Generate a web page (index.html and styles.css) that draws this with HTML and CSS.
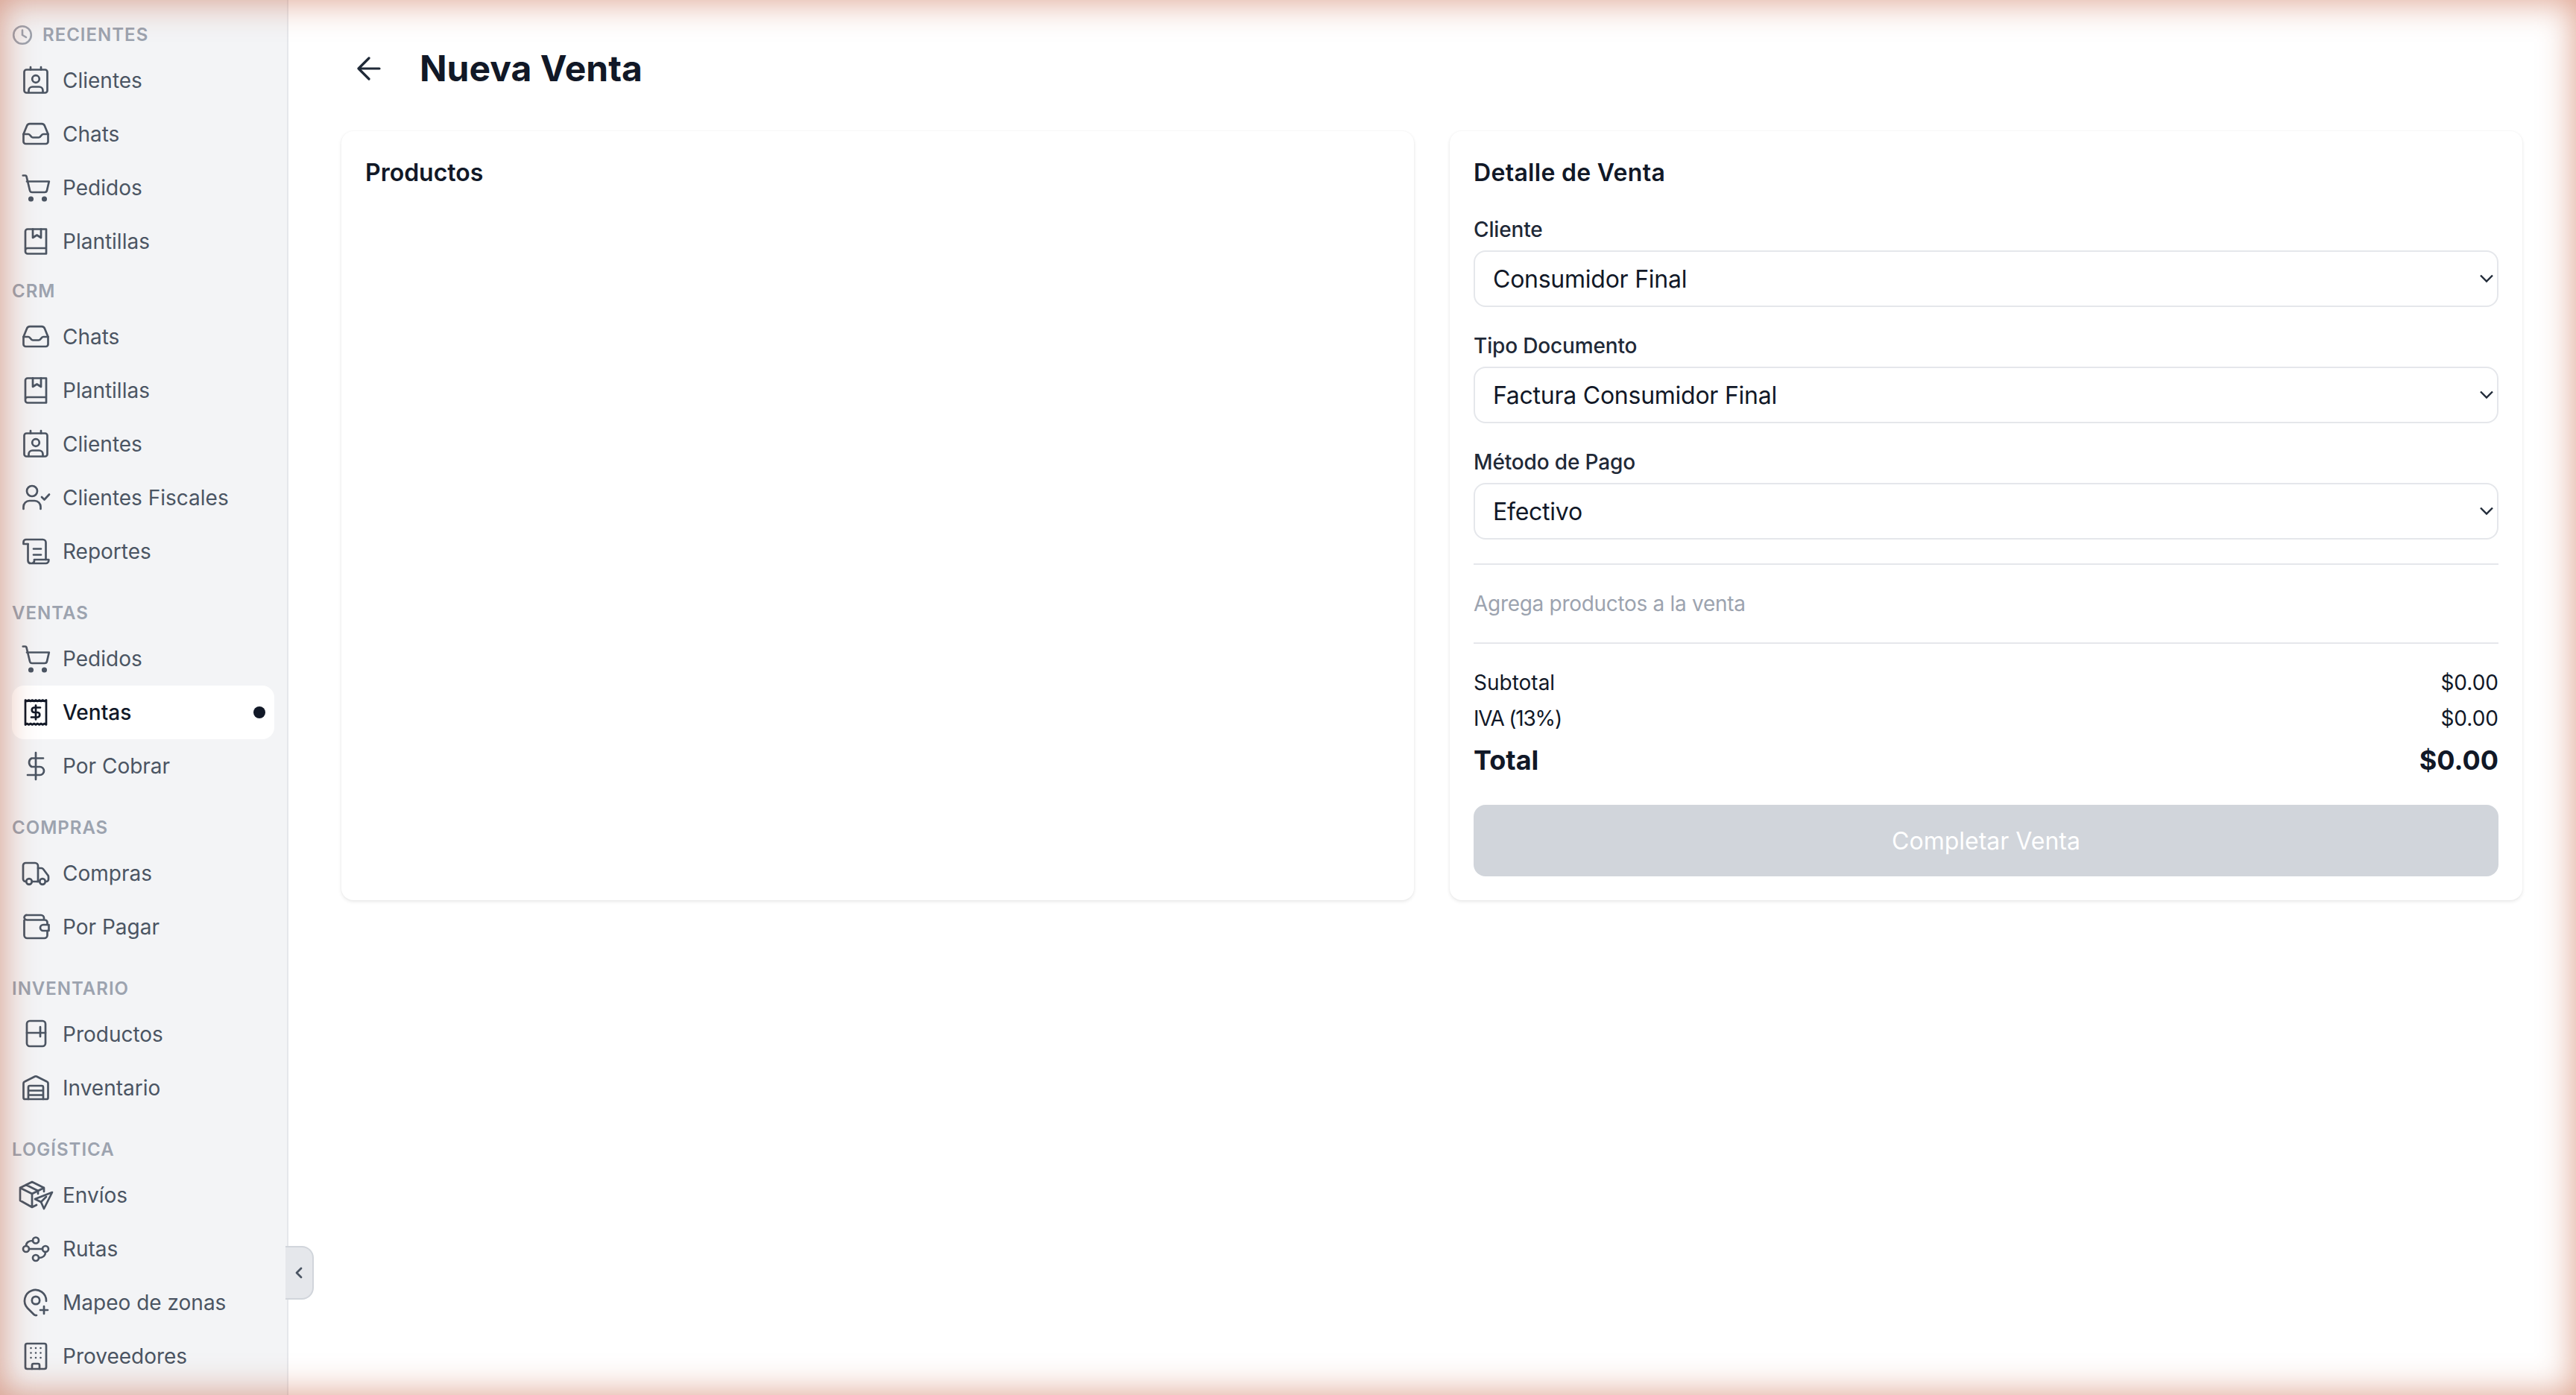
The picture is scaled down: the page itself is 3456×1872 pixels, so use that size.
FILE: index.html
```html
<!DOCTYPE html>
<html lang="es">
<head>
<meta charset="utf-8">
<title>Nueva Venta</title>
<link rel="stylesheet" href="styles.css">
</head>
<body>
<svg class="defs" aria-hidden="true">
  <symbol id="i-contact" viewBox="0 0 40 40"><rect x="4.5" y="5.5" width="31" height="31" rx="3"/><path d="M13 2v3.5M27 2v3.5"/><circle cx="20" cy="18" r="4.8"/><path d="M10.5 36v-2.5a5 5 0 0 1 5-5h9a5 5 0 0 1 5 5V36"/></symbol>
  <symbol id="i-inbox" viewBox="0 0 40 40"><path d="M3.5 20 8 9a4.500 4.500 0 0 1 4-2.800h16A4.500 4.500 0 0 1 32 9l4.500 11v10a3 3 0 0 1-3 3h-27a3 3 0 0 1-3-3z"/><path d="M3.500 20H10c3 0 3 4.500 6 4.500h8c3 0 3-4.500 6-4.500h6.500"/></symbol>
  <symbol id="i-cart" viewBox="0 0 40 40"><path d="M2.800 3.500H6c.8 0 1.300.5 1.500 1.200L12 23.500c.4 1.500 1.300 2.500 3 2.500h17c1.700 0 2.700-1 3-2.500l2.800-12H8"/><circle class="fill" cx="13.500" cy="35" r="2.200"/><circle class="fill" cx="31.500" cy="35" r="2.200"/></symbol>
  <symbol id="i-book" viewBox="0 0 40 40"><path d="M6 32V6.500a3 3 0 0 1 3-3h25v33H9a3 3 0 0 1-3-3v-1.500a3 3 0 0 1 3-3h25"/><path d="M16 3.500V15l5.500-3.500L27 15V3.500"/></symbol>
  <symbol id="i-usercheck" viewBox="0 0 40 40"><circle cx="15" cy="11" r="7"/><path d="M3.500 35v-3a8 8 0 0 1 8-8h7a8 8 0 0 1 8 8v3"/><path d="m28 19 3.500 3.500L38 15.500"/></symbol>
  <symbol id="i-scroll" viewBox="0 0 40 40"><path d="M9.500 10V32.500a4 4 0 0 0 4 3.500h20a3.800 3.800 0 0 0 3.800-3.800V31H18v1.500a3.700 3.700 0 0 1-3.500 3.500"/><path d="M33.500 31V8a4 4 0 0 0-4-4H7a3.500 3.500 0 0 0-3.500 3.500V10h6"/><path d="M17 16.500h10M17 24.500h10"/></symbol>
  <symbol id="i-receipt" viewBox="0 0 40 40"><path d="M6 3.500 8.300 5l2.300-1.500L13 5l2.300-1.500L17.700 5 20 3.500 22.300 5l2.400-1.500L27 5l2.300-1.500L31.700 5 34 3.500v33L31.700 35l-2.400 1.500L27 35l-2.300 1.500-2.400-1.500-2.300 1.500-2.300-1.500-2.400 1.500L13 35l-2.400 1.500L8.300 35 6 36.500z"/><path d="M26 13.500H17.500a3.300 3.300 0 0 0 0 6.500h5a3.300 3.300 0 0 1 0 6.500H14M20 10.500v19"/></symbol>
  <symbol id="i-dollar" viewBox="0 0 40 40"><path d="M20 2v36M30 9.500H14.500a6.500 6.500 0 0 0 0 11.500h11a5.500 5.500 0 0 1 0 11H9"/></symbol>
  <symbol id="i-truck" viewBox="0 0 40 40"><path d="M7 31H6.500a3.500 3.500 0 0 1-3.500-3.500v-18A3.500 3.500 0 0 1 6.500 6H19a4 4 0 0 1 4 4v21h-8"/><path d="M23 13h4.500a3 3 0 0 1 2.500 1.200l6.200 8.300a3 3 0 0 1 .8 2V28a3 3 0 0 1-3 3h-.5M22 31h3"/><circle cx="11" cy="31" r="3.800"/><circle cx="29" cy="31" r="3.800"/></symbol>
  <symbol id="i-wallet" viewBox="0 0 40 40"><path d="M4.500 11v20a4 4 0 0 0 4 4h23a4 4 0 0 0 4-4v-6M35.500 17v-3a3.500 3.500 0 0 0-3.500-3.500H8.500a4 4 0 0 1-4-3A3.500 3.500 0 0 1 8.500 4H27a4 4 0 0 1 4 4v2.500"/><path d="M37.500 17H30a4 4 0 0 0 0 8h7.500z"/></symbol>
  <symbol id="i-fridge" viewBox="0 0 40 40"><rect x="8" y="2" width="25" height="34" rx="4"/><path d="M8 18h25M26 10v13"/></symbol>
  <symbol id="i-garage" viewBox="0 0 40 40"><path d="M3.500 33V14a3 3 0 0 1 2-2.800L19 4.500a2.500 2.500 0 0 1 2 0l13.500 6.700a3 3 0 0 1 2 2.800v19a2 2 0 0 1-2 2h-29a2 2 0 0 1-2-2z"/><path d="M10 35V19a2 2 0 0 1 2-2h16a2 2 0 0 1 2 2v16M10 23.500h20M10 29.500h20"/></symbol>
  <symbol id="i-send" viewBox="0 0 40 40"><path d="M-1 10 15 2l16 8v5M-1 10v17l16 9 6-3M-1 10l16 8 16-8M15 18v18M7 6l16 8v4"/><path d="M42 16 19 25l8 4 4 9z"/><path d="m27 29 7-7"/></symbol>
  <symbol id="i-route" viewBox="0 0 40 40"><circle cx="20" cy="8.500" r="4"/><circle cx="7" cy="20" r="4"/><circle cx="33" cy="20" r="4"/><circle cx="20" cy="32" r="4"/><path d="M11 20h18M16 9c-5 0-9 2-9 7M24.500 32c5 0 8.500-3 8.500-8"/></symbol>
  <symbol id="i-pin" viewBox="0 0 40 40"><circle cx="20" cy="17" r="5.200"/><path d="M34 18a14.500 14.500 0 1 0-25 9.500L17.500 36c.8.800 2 1.300 3.500 1"/><path d="M31 25v10M26 30h10"/></symbol>
  <symbol id="i-building" viewBox="0 0 40 40"><rect x="6" y="3" width="28" height="34" rx="2.500"/><path d="M15 37v-5a2 2 0 0 1 2-2h6a2 2 0 0 1 2 2v5"/><path class="dots" d="M13.500 9h.01M20 9h.01M26.500 9h.01M13.500 15.500h.01M20 15.500h.01M26.500 15.500h.01M13.500 22h.01M20 22h.01M26.500 22h.01"/></symbol>
</svg>

<div class="app">
  <aside class="sidebar">
    <section class="group">
      <h2 class="group-title"><svg class="clock" viewBox="0 0 28 28"><circle cx="14" cy="14" r="11.800"/><path d="M14 7.500V14l5 3"/></svg>RECIENTES</h2>
      <a class="item"><svg class="icon"><use href="#i-contact"/></svg>Clientes</a>
      <a class="item"><svg class="icon"><use href="#i-inbox"/></svg>Chats</a>
      <a class="item"><svg class="icon"><use href="#i-cart"/></svg>Pedidos</a>
      <a class="item"><svg class="icon"><use href="#i-book"/></svg>Plantillas</a>
    </section>
    <section class="group">
      <h2 class="group-title">CRM</h2>
      <a class="item"><svg class="icon"><use href="#i-inbox"/></svg>Chats</a>
      <a class="item"><svg class="icon"><use href="#i-book"/></svg>Plantillas</a>
      <a class="item"><svg class="icon"><use href="#i-contact"/></svg>Clientes</a>
      <a class="item"><svg class="icon"><use href="#i-usercheck"/></svg>Clientes Fiscales</a>
      <a class="item"><svg class="icon"><use href="#i-scroll"/></svg>Reportes</a>
    </section>
    <section class="group spaced">
      <h2 class="group-title">VENTAS</h2>
      <a class="item"><svg class="icon"><use href="#i-cart"/></svg>Pedidos</a>
      <a class="item active"><svg class="icon"><use href="#i-receipt"/></svg>Ventas<span class="dot"></span></a>
      <a class="item"><svg class="icon"><use href="#i-dollar"/></svg>Por Cobrar</a>
    </section>
    <section class="group spaced">
      <h2 class="group-title">COMPRAS</h2>
      <a class="item"><svg class="icon"><use href="#i-truck"/></svg>Compras</a>
      <a class="item"><svg class="icon"><use href="#i-wallet"/></svg>Por Pagar</a>
    </section>
    <section class="group spaced">
      <h2 class="group-title">INVENTARIO</h2>
      <a class="item"><svg class="icon"><use href="#i-fridge"/></svg>Productos</a>
      <a class="item"><svg class="icon"><use href="#i-garage"/></svg>Inventario</a>
    </section>
    <section class="group spaced">
      <h2 class="group-title">LOGÍSTICA</h2>
      <a class="item"><svg class="icon"><use href="#i-send"/></svg>Envíos</a>
      <a class="item"><svg class="icon"><use href="#i-route"/></svg>Rutas</a>
      <a class="item"><svg class="icon"><use href="#i-pin"/></svg>Mapeo de zonas</a>
      <a class="item"><svg class="icon"><use href="#i-building"/></svg>Proveedores</a>
    </section>
    <button class="collapse" type="button" aria-label="Contraer"><svg viewBox="0 0 16 20"><path d="M11 4 5 10l6 6"/></svg></button>
  </aside>

  <main class="main">
    <header class="page-head">
      <button class="back" type="button" aria-label="Volver"><svg viewBox="0 0 48 48"><path d="M38 24H10M24 10 10 24l14 14"/></svg></button>
      <h1 class="page-title">Nueva Venta</h1>
    </header>
    <div class="columns">
      <section class="card">
        <h2 class="card-title">Productos</h2>
      </section>
      <section class="card">
        <h2 class="card-title detail-title">Detalle de Venta</h2>
        <div class="fields">
          <div class="field">
            <label class="label" for="cliente">Cliente</label>
            <div class="select-wrap">
              <select class="select" id="cliente"><option>Consumidor Final</option></select>
              <svg class="chevron" viewBox="0 0 18 12"><path d="m1 1.500 8 8 8-8"/></svg>
            </div>
          </div>
          <div class="field">
            <label class="label" for="tipo">Tipo Documento</label>
            <div class="select-wrap">
              <select class="select" id="tipo"><option>Factura Consumidor Final</option></select>
              <svg class="chevron" viewBox="0 0 18 12"><path d="m1 1.500 8 8 8-8"/></svg>
            </div>
          </div>
          <div class="field">
            <label class="label" for="pago">Método de Pago</label>
            <div class="select-wrap">
              <select class="select" id="pago"><option>Efectivo</option></select>
              <svg class="chevron" viewBox="0 0 18 12"><path d="m1 1.500 8 8 8-8"/></svg>
            </div>
          </div>
        </div>
        <p class="empty">Agrega productos a la venta</p>
        <div class="totals">
          <div class="row"><span>Subtotal</span><span>$0.00</span></div>
          <div class="row"><span class="narrow">IVA (13%)</span><span>$0.00</span></div>
          <div class="row total"><span>Total</span><span>$0.00</span></div>
        </div>
        <button class="submit" type="button" disabled>Completar Venta</button>
      </section>
    </div>
  </main>
</div>
<div class="glow"></div>
</body>
</html>
```

FILE: styles.css
```css
* { box-sizing: border-box; }

html, body {
  margin: 0;
  height: 100%;
  overflow: hidden;
  background: #fff;
}

body {
  font-family: Inter, "Liberation Sans", sans-serif;
  color: #111827;
}

.defs { display: none; }

.app {
  display: flex;
  height: 1872px;
}

.sidebar {
  position: relative;
  flex: 0 0 387px;
  padding: 16px 17px 0 16px;
  background: #f3f4f6;
  border-right: 2px solid #e5e7eb;
}

.group.spaced { margin-top: 16px; }

.group-title {
  display: flex;
  align-items: center;
  gap: 13px;
  height: 56px;
  margin: 0;
  padding: 15px 0 9px 0;
  font-size: 24px;
  line-height: 32px;
  font-weight: 600;
  letter-spacing: 1px;
  color: #9ca3af;
}

.clock {
  width: 28px;
  height: 28px;
  fill: none;
  stroke: #9ca3af;
  stroke-width: 2.600;
  stroke-linecap: round;
  stroke-linejoin: round;
}

.item {
  display: flex;
  align-items: center;
  gap: 16px;
  height: 72px;
  padding: 0 12px;
  border-radius: 16px;
  font-size: 28px;
  font-weight: 400;
  color: #4b5563;
}

.item.active {
  background: #fff;
  color: #111827;
  font-weight: 500;
}

.icon {
  flex: 0 0 40px;
  width: 40px;
  height: 40px;
  overflow: visible;
  fill: none;
  stroke: currentColor;
  stroke-width: 2.700;
  stroke-linecap: round;
  stroke-linejoin: round;
}

symbol { overflow: visible; }
symbol .fill { fill: currentColor; }
symbol .dots { stroke-width: 2.600; }

.dot {
  width: 16px;
  height: 16px;
  margin-left: auto;
  border-radius: 50%;
  background: #111827;
}

.collapse {
  position: absolute;
  top: 1672px;
  left: 383px;
  display: flex;
  align-items: center;
  justify-content: center;
  width: 38px;
  height: 72px;
  padding: 0;
  background: #e5e7eb;
  border: 2px solid #d1d5db;
  border-left: 0;
  border-radius: 0 16px 16px 0;
}

.collapse svg {
  width: 16px;
  height: 20px;
  fill: none;
  stroke: #4b5563;
  stroke-width: 2.800;
  stroke-linecap: round;
  stroke-linejoin: round;
}

.main {
  flex: 1;
  min-width: 0;
  padding: 56px 72px 0 71px;
}

.page-head {
  display: flex;
  align-items: center;
  gap: 31px;
  margin-bottom: 48px;
}

.back {
  display: flex;
  align-items: center;
  justify-content: center;
  width: 74px;
  height: 72px;
  padding: 0;
  border: 0;
  background: none;
}

.back svg {
  width: 48px;
  height: 48px;
  fill: none;
  stroke: #1f2937;
  stroke-width: 3.200;
  stroke-linecap: round;
  stroke-linejoin: round;
}

.page-title {
  margin: 0;
  font-size: 48px;
  line-height: 64px;
  font-weight: 700;
  color: #111827;
}

.columns {
  display: grid;
  grid-template-columns: 1fr 1fr;
  gap: 48px;
}

.card {
  padding: 32px;
  background: #fff;
  border-radius: 16px;
  box-shadow: 0 2px 5px rgba(0, 0, 0, .09), 0 0 3px rgba(0, 0, 0, .04);
}

.card-title {
  margin: 0;
  font-size: 32px;
  line-height: 48px;
  font-weight: 600;
  color: #111827;
}

.detail-title {
  margin-bottom: 32px;
  letter-spacing: .3px;
}

.fields {
  display: flex;
  flex-direction: column;
  gap: 32px;
}

.label {
  display: block;
  margin-bottom: 8px;
  font-size: 28px;
  line-height: 40px;
  font-weight: 500;
  letter-spacing: -.15px;
  color: #1f2937;
}

.select-wrap { position: relative; }

.select {
  display: block;
  width: 100%;
  height: 76px;
  padding: 0 24px;
  appearance: none;
  font-family: inherit;
  font-size: 32px;
  letter-spacing: -.25px;
  color: #111827;
  background: #fff;
  border: 2px solid #e5e7eb;
  border-radius: 16px;
}

.chevron {
  position: absolute;
  top: 32px;
  right: 7px;
  width: 18px;
  height: 12px;
  fill: none;
  stroke: #1f2937;
  stroke-width: 2.400;
}

.empty {
  margin: 32px 0 0;
  padding: 32px 0;
  border-top: 2px solid #e5e7eb;
  border-bottom: 2px solid #e5e7eb;
  font-size: 28px;
  line-height: 40px;
  letter-spacing: -.3px;
  color: #9ca3af;
}

.totals {
  display: flex;
  flex-direction: column;
  gap: 8px;
  margin-top: 32px;
}

.row {
  display: flex;
  justify-content: space-between;
  font-size: 28px;
  line-height: 40px;
  color: #111827;
}

.narrow { letter-spacing: -1.200px; }

.row.total {
  font-size: 36px;
  line-height: 56px;
  font-weight: 700;
}

.submit {
  display: block;
  width: 100%;
  height: 96px;
  margin-top: 32px;
  border: 0;
  border-radius: 16px;
  background: #d1d5db;
  font-family: inherit;
  font-size: 32px;
  font-weight: 400;
  color: #fff;
}

.glow {
  position: fixed;
  inset: 0;
  pointer-events: none;
  box-shadow: inset 0 0 46px 2px rgba(190, 70, 30, .5);
}
```
